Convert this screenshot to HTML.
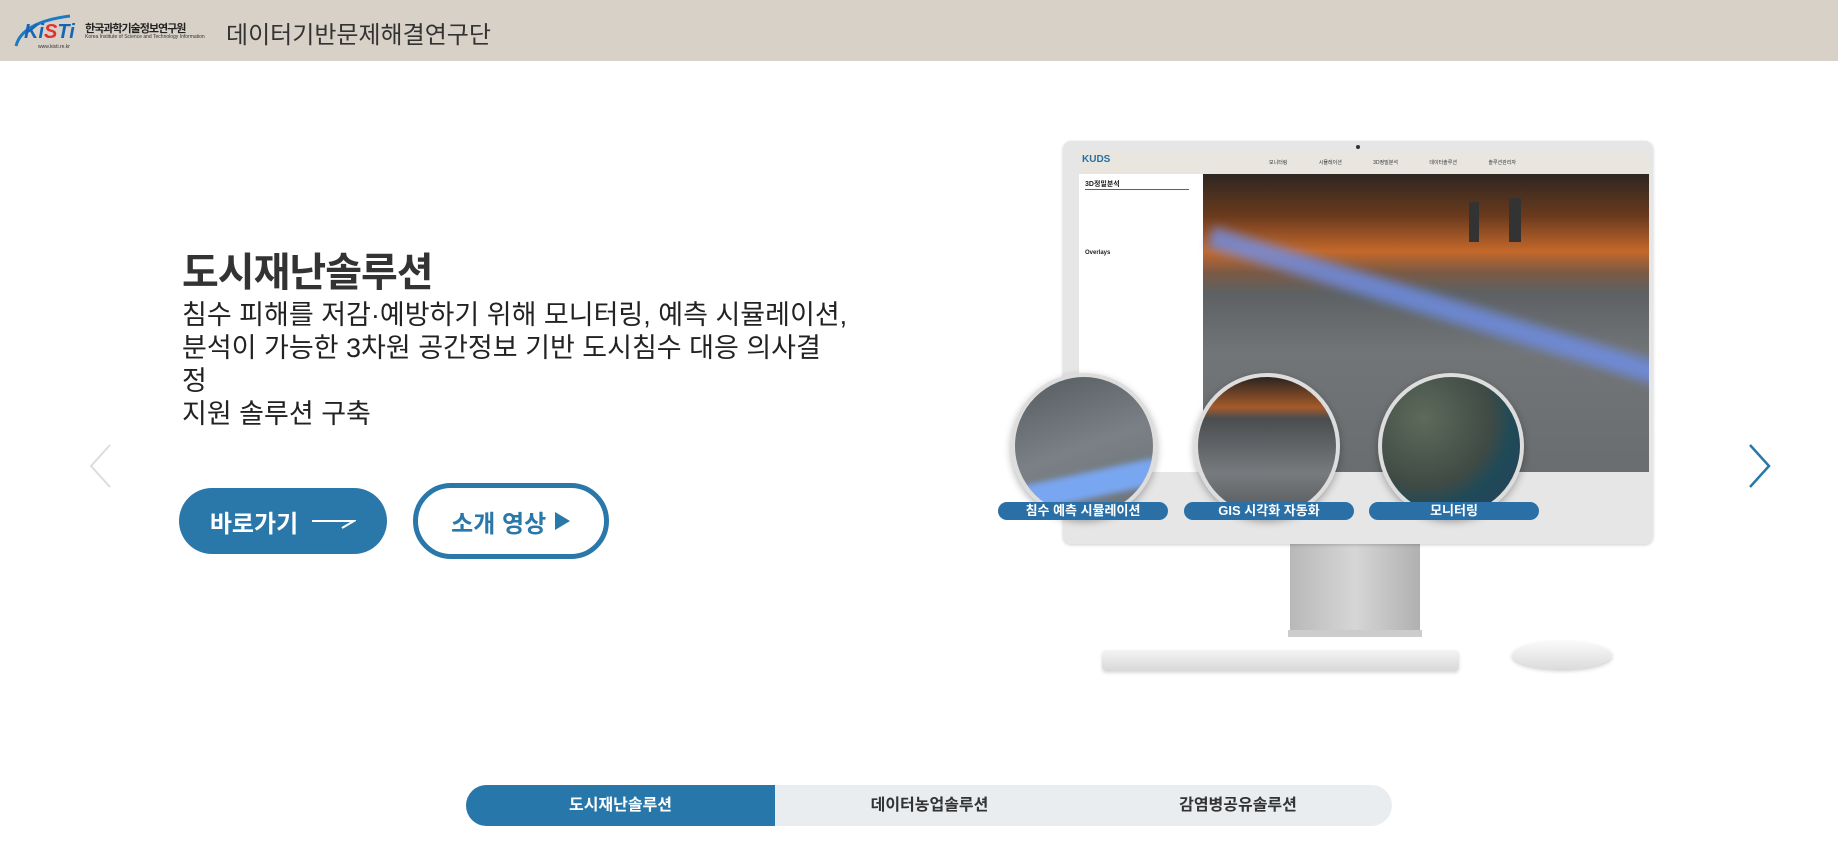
<!DOCTYPE html>
<html><head><meta charset="utf-8"><style>
*{margin:0;padding:0;box-sizing:border-box}
body{width:1838px;height:843px;overflow:hidden;background:#fff;font-family:"Liberation Sans","Noto Sans CJK KR",sans-serif;position:relative;color:#222}
.hdr{position:absolute;left:0;top:0;width:1838px;height:61px;background:#d8d1c7}
.abs{position:absolute}
.btn1{left:179px;top:488px;width:208px;height:66px;border-radius:33px;background:#2a77aa;color:#fff;font-size:24px;font-weight:bold;display:flex;align-items:center;justify-content:center;gap:12px}
.btn2{left:413px;top:483px;width:196px;height:76px;border-radius:38px;border:5px solid #2a77aa;color:#2a77aa;font-size:24px;font-weight:bold;display:flex;align-items:center;justify-content:center}
.pill{position:absolute;top:502px;height:18px;border-radius:9px;background:#2a70a6;color:#fff;font-size:13px;font-weight:bold;text-align:center;line-height:18px}
.circ{position:absolute;top:373px;width:146px;height:146px;border-radius:50%;border:4px solid #ddd;box-shadow:0 3px 8px rgba(0,0,0,.3);overflow:hidden}
.tab{position:absolute;top:785px;height:41px;font-size:16px;font-weight:bold;line-height:41px;text-align:center}
</style></head><body>
<div class="hdr">
  <svg class="abs" style="left:12px;top:10px" width="80" height="42" viewBox="0 0 80 42">
    <path d="M4 36 Q10 12 58 6" stroke="#1b7ac4" stroke-width="3" fill="none"/>
    <text x="12" y="28" font-family="Liberation Sans" font-weight="bold" font-style="italic" font-size="20" fill="#1565b8">Ki<tspan fill="#e03030">S</tspan>Ti</text>
    <text x="26" y="38" font-family="Liberation Sans" font-size="5" fill="#333">www.kisti.re.kr</text>
  </svg>
  <div class="abs" style="left:85px;top:20px;font-size:11px;font-weight:bold;color:#222;letter-spacing:-1px">한국과학기술정보연구원</div>
  <div class="abs" style="left:85px;top:34px;font-size:5px;color:#333">Korea Institute of Science and Technology Information</div>
  <div class="abs" style="left:226px;top:15px;font-size:24px;color:#333">데이터기반문제해결연구단</div>
</div>

<div class="abs" style="left:182px;top:240px;font-size:40px;font-weight:bold;color:#333;letter-spacing:-1px">도시재난솔루션</div>
<div class="abs" style="left:182px;top:299px;font-size:27px;line-height:33px;color:#222;width:720px">침수 피해를 저감·예방하기 위해 모니터링, 예측 시뮬레이션,<br>분석이 가능한 3차원 공간정보 기반 도시침수 대응 의사결<br>정<br>지원 솔루션 구축</div>
<div class="abs btn1">바로가기 <svg width="46" height="16" viewBox="0 0 46 16"><path d="M2 8 H44 L32 15" stroke="#fff" stroke-width="2" fill="none"/></svg></div>
<div class="abs btn2">소개 영상&nbsp;<svg width="18" height="20" viewBox="0 0 18 20"><path d="M2 1 L17 10 L2 19Z" fill="#2a77aa"/></svg></div>

<svg class="abs" style="left:88px;top:443px" width="24" height="46"><path d="M22 2 L3 23 L22 44" stroke="#ddd" stroke-width="2" fill="none"/></svg>
<svg class="abs" style="left:1748px;top:443px" width="24" height="46"><path d="M2 2 L21 23 L2 44" stroke="#2a77aa" stroke-width="2.5" fill="none"/></svg>

<!-- monitor -->
<div class="abs" style="left:1290px;top:540px;width:130px;height:97px;background:linear-gradient(90deg,#b8b8b8,#d6d6d6 50%,#b0b0b0)"></div>
<div class="abs" style="left:1288px;top:630px;width:134px;height:7px;background:#ccc"></div>
<div class="abs" style="left:1063px;top:141px;width:590px;height:403px;border-radius:8px;background:#e6e6e6;box-shadow:0 1px 3px rgba(0,0,0,.2)"></div>
<div class="abs" style="left:1356px;top:145px;width:4px;height:4px;border-radius:50%;background:#333"></div>
<div class="abs" style="left:1079px;top:152px;width:570px;height:320px;background:#f4f4f4;overflow:hidden">
  <div class="abs" style="left:0;top:0;width:570px;height:22px;background:#e9e5df"></div>
  <div class="abs" style="left:3px;top:2px;font-size:10px;font-weight:bold;color:#2a70a6">KUDS</div>
  <div class="abs" style="left:190px;top:7px;font-size:5px;color:#333;word-spacing:30px">모니터링 시뮬레이션 3D정밀분석 데이터솔루션 솔루션관리자</div>
  <div class="abs" style="left:0;top:22px;width:124px;height:298px;background:#fff"></div>
  <div class="abs" style="left:6px;top:27px;font-size:7px;font-weight:bold">3D정밀분석</div>
  <div class="abs" style="left:6px;top:37px;width:104px;height:1px;background:#2a70a6"></div>
  <div class="abs" style="left:6px;top:98px;font-size:6px;font-weight:bold">Overlays</div>
  <div class="abs" style="left:124px;top:22px;width:446px;height:298px;background:linear-gradient(180deg,#2d2620 0%,#6a3a1e 14%,#c4682a 26%,#7b5a44 33%,#5d6163 40%,#727577 60%,#6a6d6f 100%)"></div>
  <div class="abs" style="left:120px;top:150px;width:520px;height:22px;background:#6f8fe8;transform:rotate(17deg);filter:blur(5px);opacity:.8"></div>
  <div class="abs" style="left:390px;top:50px;width:10px;height:40px;background:#333"></div>
  <div class="abs" style="left:430px;top:46px;width:12px;height:44px;background:#333"></div>
</div>
<div class="abs" style="left:1102px;top:650px;width:357px;height:21px;border-radius:4px;background:linear-gradient(#f4f4f4,#d8d8d8);box-shadow:0 2px 3px rgba(0,0,0,.15)"></div>
<div class="abs" style="left:1512px;top:641px;width:100px;height:28px;border-radius:50%;background:linear-gradient(#fafafa,#dcdcdc);box-shadow:0 2px 4px rgba(0,0,0,.2)"></div>

<div class="circ" style="left:1011px;background:linear-gradient(160deg,#555c60,#7a8085 50%,#6c7378);"><div style="position:absolute;left:-10px;top:95px;width:170px;height:26px;background:#79a6f0;transform:rotate(-12deg);filter:blur(3px)"></div></div>
<div class="circ" style="left:1194px;background:linear-gradient(180deg,#2b2420 0%,#a55a2a 22%,#4a4d50 30%,#777b7e 70%,#55595c)"></div>
<div class="circ" style="left:1378px;background:radial-gradient(circle at 30% 30%,#5d6b5a,#3f4a45 50%,#1f4a58 65%,#2a3f5a)"></div>
<div class="pill" style="left:998px;width:170px">침수 예측 시뮬레이션</div>
<div class="pill" style="left:1184px;width:170px">GIS 시각화 자동화</div>
<div class="pill" style="left:1369px;width:170px">모니터링</div>

<div class="abs" style="left:466px;top:785px;width:926px;height:41px;border-radius:21px;background:#eaedf0;overflow:hidden">
  <div style="position:absolute;left:0;top:0;width:309px;height:41px;background:#2777aa"></div>
</div>
<div class="tab" style="left:466px;width:309px;color:#fff">도시재난솔루션</div>
<div class="tab" style="left:775px;width:309px;color:#333">데이터농업솔루션</div>
<div class="tab" style="left:1084px;width:308px;color:#333">감염병공유솔루션</div>
</body></html>
